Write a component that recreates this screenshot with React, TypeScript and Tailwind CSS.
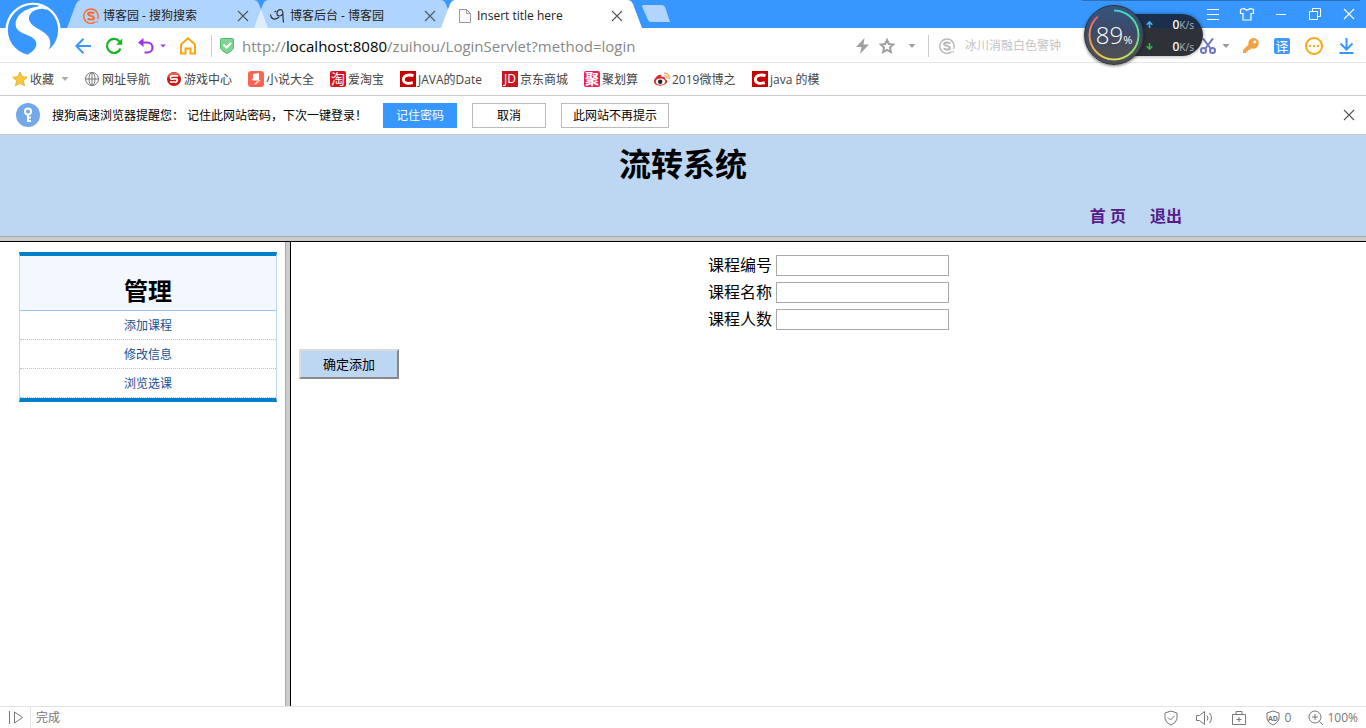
import React from "react";

const tabShape =
  "[clip-path:polygon(0_100%,9px_4px,11px_1px,14px_0,calc(100%_-_14px)_0,calc(100%_-_11px)_1px,calc(100%_-_9px)_4px,100%_100%)]";

function Caret({ className }: { className: string }) {
  return (
    <svg viewBox="0 0 8 4" className={`h-1 w-2 shrink-0 fill-current ${className}`}>
      <path d="M0.500 0h7L4 4z" />
    </svg>
  );
}

function Cross({ className }: { className: string }) {
  return (
    <svg viewBox="0 0 12 12" className={`size-3 shrink-0 fill-none stroke-current ${className}`} strokeWidth="1.1">
      <path d="M1 1l10 10M11 1L1 11" />
    </svg>
  );
}

function SogouMark({ className }: { className: string }) {
  return (
    <svg viewBox="0 0 16 16" className={`size-4 shrink-0 fill-none stroke-current ${className}`}>
      <path d="M12.500 13.800A7.200 7.200 0 1 1 14.600 11" strokeWidth="1.400" />
      <path d="M11.200 5.300C9.500 4.200 5 4 5 6.100 5 8.200 11 7.500 11 9.900 11 12 6.500 11.900 4.700 10.700" strokeWidth="2" />
      <path d="M13.700 14.300l1-1" strokeWidth="1.400" />
    </svg>
  );
}

function CsdnMark() {
  return (
    <span className="flex size-4 shrink-0 items-center justify-center bg-[#c80000]">
      <svg viewBox="0 0 16 16" className="size-4 fill-none stroke-white" strokeWidth="2.800">
        <path d="M13.500 4.600C9 3.200 3.600 4.300 3.400 8.400 3.200 12.500 8.500 12.900 12.800 11.600" />
      </svg>
    </span>
  );
}

function Tab({ title, icon, active }: { title: string; icon: React.ReactNode; active?: boolean }) {
  return (
    <div
      className={`-mr-[14px] flex h-7 w-[201px] items-center pl-4 pr-[19px] pt-1 ${tabShape} ${
        active ? "bg-white" : "bg-white/60"
      }`}
    >
      <span className="flex w-5 shrink-0">{icon}</span>
      <button className="min-w-0 flex-1 text-left text-xs leading-5 whitespace-nowrap text-[#222]">{title}</button>
      <button aria-label="关闭标签" className="text-[#555]">
        <Cross className="" />
      </button>
    </div>
  );
}

function Bookmark({ icon, label, width }: { icon: React.ReactNode; label: string; width: string }) {
  return (
    <a href="#" className={`flex shrink-0 items-center gap-[2px] ${width}`}>
      {icon}
      <span className="pt-[2px] text-xs leading-5 whitespace-nowrap text-[#444]">{label}</span>
    </a>
  );
}

function BrowserLogo() {
  return (
    <svg viewBox="0 0 174 174" className="absolute left-[4px] top-[2px] size-[58px]">
      <circle cx="87" cy="85" r="83" fill="#fff" />
      <circle cx="87" cy="84" r="75.500" fill="#3797ff" />
      <path
        fill="#fff"
        d="M112 6L100 14C66 18 35 38 35 66C35 92 66 95 84 106C104 118 102 142 72 157L84 170L126 152C142 138 144 114 128 98C112 82 78 74 75 52C73 34 90 22 112 20C118 20 126 22 132 24Z"
      />
    </svg>
  );
}

function SpeedWidget() {
  return (
    <div className="absolute left-[1084px] top-[5px] h-[60px] w-[120px]">
      <div className="absolute left-[30px] top-[9px] flex h-[42px] w-[89px] flex-col justify-between rounded-r-full bg-[linear-gradient(#1b2f4c_0,#1b2f4c_33%,#2f3138_34%,#2f3138)] py-[2px] pl-[32px] pr-[9px] shadow-[0_0_4px_rgba(0,0,0,0.4)]">
        {["#3ab0f5", "#35b84a"].map((color, i) => (
          <div key={color} className="flex h-4 items-center justify-between text-white">
            <svg viewBox="0 0 8 8" className={`size-[7px] fill-none ${i ? "rotate-180" : ""}`} stroke={color} strokeWidth="1.800">
              <path d="M4 8V1M0.800 4.300L4 1l3.200 3.300" />
            </svg>
            <span className="flex items-baseline pt-[2px] font-[Noto_Sans]">
              <b className="text-xs leading-4 font-medium">0</b>
              <span className="text-[10px] leading-4 text-[#a5a9b2]">K/s</span>
            </span>
          </div>
        ))}
      </div>
      <div className="absolute left-0 top-0 flex size-[60px] items-center justify-center rounded-full border border-[#2b3039] bg-[linear-gradient(#35557f_0,#3c4a66_45%,#4c4e58_75%)] shadow-[0_1px_3px_rgba(0,0,0,0.5)]">
        <div className="absolute inset-[3px] rounded-full bg-[conic-gradient(#38d6dc_0,#4fdd9a_20%,#8fe06a_35%,#e6dd4e_50%,#f0b04c_65%,#ef8a52_77%,#e85a7a_88%,transparent_89%)] [mask:radial-gradient(closest-side,transparent_calc(100%_-_3px),#000_calc(100%_-_2px),#000_calc(100%_-_1px),transparent)]" />
        <span className="flex items-baseline font-['Open_Sans'] font-light text-white">
          <span className="text-2xl leading-8">89</span>
          <span className="text-[11px] font-normal">%</span>
        </span>
      </div>
    </div>
  );
}

function TabStrip() {
  return (
    <div className="flex h-7 bg-[#3797ff] pl-[67px]">
      <Tab title="博客园 - 搜狗搜索" icon={<SogouMark className="text-[#ff6a2b]" />} />
      <Tab
        title="博客后台 - 博客园"
        icon={
          <svg viewBox="0 0 16 16" className="size-4 fill-none stroke-[#333]" strokeWidth="1.200">
            <path d="M0.500 6.500C1 11.500 5 12.500 9 9M12.500 6C11 9 6.500 8.500 7 5 7.500 1 12.500 0.500 12.800 4 13 8 13 11 13.500 14.500M4.500 4l1.500-1" />
          </svg>
        }
      />
      <Tab
        active
        title="Insert title here"
        icon={
          <svg viewBox="0 0 14 16" className="ml-[1px] h-4 w-[14px] fill-[#fafafa] stroke-[#999]">
            <path d="M1.500 1.500h7l4 4v9h-11zM8.500 1.500v4h4" />
          </svg>
        }
      />
      <button aria-label="新标签页" className="ml-[14px] mt-[5px] h-[17px] w-7">
        <svg viewBox="0 0 28 17" className="h-[17px] w-7 fill-[#b1d5ff]">
          <path d="M2 0h18q2 0 3 2l5 15H9q-2 0-3-2L0 1.500Q0 0 2 0z" />
        </svg>
      </button>
      <div className="ml-auto flex items-center pr-[10px] text-white">
        <button aria-label="菜单" className="flex w-[34px] justify-center">
          <svg viewBox="0 0 12 12" className="size-3 stroke-current">
            <path d="M0 1.500h12M0 6.500h12M0 11.500h12" />
          </svg>
        </button>
        <button aria-label="皮肤" className="flex w-[34px] justify-center">
          <svg viewBox="0 0 16 14" className="h-[14px] w-4 fill-none stroke-current" strokeWidth="1.200">
            <path d="M5 1.500L1.500 2.500v4H4v6.500h8V6.500h2.500v-4L11 1.500Q8 4.500 5 1.500z" />
          </svg>
        </button>
        <button aria-label="最小化" className="flex w-[34px] justify-center">
          <svg viewBox="0 0 12 12" className="size-3 stroke-current">
            <path d="M1 6.500h10" />
          </svg>
        </button>
        <button aria-label="还原" className="flex w-[34px] justify-center">
          <svg viewBox="0 0 12 12" className="size-3 fill-none stroke-current">
            <path d="M0.500 3.500h8v8h-8zM3.500 3V.500h8v8H9" />
          </svg>
        </button>
        <button aria-label="关闭" className="flex w-6 justify-end pr-[1px]">
          <Cross className="" />
        </button>
      </div>
    </div>
  );
}

function AddressBar() {
  return (
    <div className="flex h-[35px] items-center border-b border-[#e5e5e5] pt-[2px] pr-3 pl-[75px]">
      <button aria-label="后退" className="w-[30px]">
        <svg viewBox="0 0 16 16" className="size-4 fill-none stroke-[#3797ff]" strokeWidth="2">
          <path d="M16 8H2M8.500 0.800L1.300 8l7.200 7.200" />
        </svg>
      </button>
      <button aria-label="刷新" className="w-[33px]">
        <svg viewBox="0 0 18 18" className="size-[18px] fill-none stroke-[#12b81f]" strokeWidth="2.200">
          <path d="M15.500 11.500A7 7 0 1 1 14.800 5" />
          <path d="M17.200 1.500v6.200h-6z" className="fill-[#12b81f] stroke-none" />
        </svg>
      </button>
      <button aria-label="撤销" className="flex w-[42px] items-center gap-[6px] text-[#a033f0]">
        <svg viewBox="0 0 16 16" className="size-4 fill-none stroke-current" strokeWidth="2.200">
          <path d="M3 4.500h6.500a5 5 0 0 1 0 10H6.500" />
          <path d="M5.500 0v9L0 4.500z" className="fill-current stroke-none" />
        </svg>
        <Caret className="w-[6px]" />
      </button>
      <button aria-label="主页" className="w-[31px]">
        <svg viewBox="0 0 16 18" className="h-[18px] w-4 fill-none stroke-[#ffa511]" strokeWidth="2">
          <path d="M1 7.500L8 1.300l7 6.200V16.500h-4.500v-5h-5v5H1z" />
        </svg>
      </button>
      <span className="h-[22px] w-px bg-[#ccc]" />
      <svg viewBox="0 0 14 16" className="ml-2 h-4 w-[14px] fill-[#7fd394] stroke-[#4fbd69]">
        <path d="M.500 1.500q0-1 1-1h11q1 0 1 1v8.500Q12 13.500 7 15.500 2 13.500.500 10z" />
        <path d="M3.500 6.500l3 3L11 5" className="fill-none stroke-white" strokeWidth="2" />
      </svg>
      <p className="ml-2 flex-1 text-[15px] leading-6 whitespace-nowrap text-[#888]">
        http://<span className="text-black">localhost:8080</span>/zuihou/LoginServlet?method=login
      </p>
      <div className="flex items-center text-[#a0a0a0]">
        <svg viewBox="0 0 14 16" className="h-4 w-[14px] fill-current">
          <path d="M8.500 0L0 9h5.500L4 16l9-9.500H7.500z" />
        </svg>
        <svg viewBox="0 0 16 16" className="ml-[9px] size-4 fill-none stroke-current" strokeWidth="2">
          <path d="M8 2l1.800 4 4.500.500-3.300 3 .900 4.500L8 11.800 4.100 14 5 9.500l-3.300-3L6.200 6z" />
        </svg>
        <Caret className="ml-[13px]" />
        <span className="ml-3 h-[22px] w-px bg-[#ccc]" />
        <SogouMark className="ml-[10px] text-[#b8b8b8]" />
      </div>
      <input
        aria-label="搜索"
        placeholder="冰川消融白色警钟"
        className="ml-[10px] w-[235px] text-xs leading-5 outline-none placeholder:text-[#c4c4c4]"
      />
      <button aria-label="截图" className="w-4">
        <svg viewBox="0 0 16 16" className="size-4 fill-none stroke-[#6a76c0]" strokeWidth="2">
          <path d="M3 0.500L11 11M13 0.500L5 11" />
          <circle cx="3.500" cy="12.500" r="2.500" />
          <circle cx="12.500" cy="12.500" r="2.500" />
        </svg>
      </button>
      <Caret className="ml-[6px] text-[#999]" />
      <button aria-label="密码" className="ml-[13px]">
        <svg viewBox="0 0 16 16" className="size-4 fill-[#f3a144]">
          <path d="M10.500 0a5.300 5.300 0 1 1-2 10.200L6.500 12H5v1.500H3.500V15H0v-3l5.500-5.500A5.300 5.300 0 0 1 10.500 0zm1.300 2.500a1.500 1.500 0 1 0 .010 0z" />
        </svg>
      </button>
      <button aria-label="翻译" className="ml-[15px] flex size-4 items-center justify-center rounded-[2px] bg-[#4099f8] text-[13px] leading-4 text-white">
        译
      </button>
      <button aria-label="更多" className="ml-[15px]">
        <svg viewBox="0 0 18 18" className="size-[18px] fill-none stroke-[#ffa511]" strokeWidth="2">
          <circle cx="9" cy="9" r="8" />
          <path d="M4 9h2M8 9h2M12 9h2" />
        </svg>
      </button>
      <button aria-label="下载" className="ml-4">
        <svg viewBox="0 0 15 16" className="h-4 w-[15px] fill-none stroke-[#3797ff]" strokeWidth="2">
          <path d="M7.500 0v11M1.500 5.500l6 6 6-6M0.500 15h14" />
        </svg>
      </button>
    </div>
  );
}

function BookmarkBar() {
  return (
    <nav className="flex h-[33px] items-center gap-4 border-b border-[#ccc] pl-3">
      <div className="flex w-14 items-center gap-[2px] text-xs leading-5 text-[#444]">
        <svg viewBox="0 0 16 16" className="size-4 shrink-0 fill-[#f8c93a] stroke-[#e3a92a]" strokeWidth="0.800">
          <path d="M8 1l2.100 4.700 5.200.500-3.900 3.500 1.100 5.100L8 12.200l-4.500 2.600 1.100-5.100L.700 6.200l5.200-.500z" />
        </svg>
        <span className="shrink-0 pt-[2px]">收藏</span>
        <Caret className="ml-[5px] text-[#aaa]" />
      </div>
      <Bookmark
        width="w-[66px]"
        label="网址导航"
        icon={
          <svg viewBox="0 0 16 16" className="size-4 shrink-0 fill-none stroke-[#777]">
            <circle cx="8" cy="8" r="6.500" />
            <ellipse cx="8" cy="8" rx="3" ry="6.500" />
            <path d="M8 1.500v13M1.500 8h13" />
          </svg>
        }
      />
      <Bookmark
        width="w-[66px]"
        label="游戏中心"
        icon={
          <svg viewBox="0 0 16 16" className="size-4 shrink-0">
            <circle cx="8" cy="8" r="7" fill="#c9140f" />
            <path d="M1.500 6a7 7 0 0 1 13 0Q8 3 1.500 6z" fill="#e8624f" />
            <path d="M12 4.800H6.500Q4 5 4.500 7T7.500 7.800H10Q12 8 11 10T9 11H3.800" fill="none" stroke="#fff" strokeWidth="1.700" />
          </svg>
        }
      />
      <Bookmark
        width="w-[66px]"
        label="小说大全"
        icon={
          <svg viewBox="0 0 16 16" className="size-4 shrink-0">
            <rect width="16" height="16" rx="3" fill="#fb6450" />
            <path d="M5 3l6-1v6.500L9 9.500H5.500L3.500 8.500Q5 8 5 7z" fill="#fff" />
            <path d="M11 8.500l1.500.800-4.500 4.200H6L8 11z" fill="#ffd5cd" />
          </svg>
        }
      />
      <Bookmark
        width="w-[54px]"
        label="爱淘宝"
        icon={<span className="flex size-4 shrink-0 items-center justify-center rounded-[2px] bg-[#d8151f] text-sm leading-4 text-white">淘</span>}
      />
      <Bookmark width="w-[86px]" label="JAVA的Date" icon={<CsdnMark />} />
      <Bookmark
        width="w-[66px]"
        label="京东商城"
        icon={<span className="flex size-4 shrink-0 items-center justify-center bg-[#c41921] text-xs leading-4 text-white">JD</span>}
      />
      <Bookmark
        width="w-[54px]"
        label="聚划算"
        icon={<span className="flex size-4 shrink-0 items-center justify-center rounded-[2px] bg-[#f01e56] text-sm leading-4 font-bold text-white">聚</span>}
      />
      <Bookmark
        width="w-[82px]"
        label="2019微博之"
        icon={
          <svg viewBox="0 0 16 16" className="size-4 shrink-0">
            <path d="M0 10.500C0 7 5 2.800 7 4q1 .800.400 2.200C10 5.300 11.500 6 11 8c3 1 2.500 3.500.500 5-4 2.800-11.500 2-11.500-2.500z" fill="#d9292b" />
            <ellipse cx="6.500" cy="10.600" rx="4.700" ry="3.200" fill="#fff" />
            <circle cx="6.200" cy="10.800" r="2.200" fill="#222" />
            <path d="M10 2.200a4.600 4.600 0 0 1 5 6M10.500 4.500a2.400 2.400 0 0 1 2.600 3" fill="none" stroke="#f5a13a" strokeWidth="1.200" />
          </svg>
        }
      />
      <Bookmark width="w-[70px]" label="java 的模" icon={<CsdnMark />} />
    </nav>
  );
}

function PasswordPrompt() {
  return (
    <div className="flex h-[39px] items-center border-b border-[#ccc] pr-[11px] pl-4 text-xs leading-5 whitespace-nowrap text-black">
      <svg viewBox="0 0 24 24" className="size-6 shrink-0">
        <circle cx="12" cy="12" r="12" fill="#73a8ea" />
        <circle cx="12" cy="8.500" r="3" fill="none" stroke="#fff" strokeWidth="2" />
        <path d="M12 11.500V19M12 14.500h3M12 18h3" fill="none" stroke="#fff" strokeWidth="2" />
      </svg>
      <span className="ml-3 w-[331px] pt-[2px]">搜狗高速浏览器提醒您： 记住此网站密码，下次一键登录！</span>
      <button className="h-[25px] w-[74px] bg-[#3797ff] pt-[2px] text-white">记住密码</button>
      <button className="ml-[15px] h-[25px] w-[74px] border border-[#bbb] pt-[2px]">取消</button>
      <button className="ml-[15px] h-[25px] w-[108px] border border-[#bbb] pt-[2px]">此网站不再提示</button>
      <button aria-label="关闭提示" className="ml-auto text-[#555]">
        <Cross className="" />
      </button>
    </div>
  );
}

function PageHeader() {
  return (
    <header className="h-[101px] shrink-0 bg-[#bdd7f2] pt-[5px]">
      <h1 className="text-center text-[32px] leading-12 font-bold text-black">流转系统</h1>
      <nav className="mt-4 flex justify-end gap-6 pr-[184px] text-base leading-6 font-bold text-[#551a8b]">
        <a href="#">首 页</a>
        <a href="#">退出</a>
      </nav>
    </header>
  );
}

function SideMenu() {
  return (
    <aside className="w-[285px] shrink-0 pt-[10px] pr-2 pl-[19px]">
      <div className="border-x border-y-4 border-x-[#bdd7f2] border-y-[#0080c9] text-center">
        <h2 className="h-[55px] border-b border-[#9ac7f0] bg-[#f3f8ff] pt-[19px] text-2xl leading-8 font-bold text-black">管理</h2>
        <ul>
          {["添加课程", "修改信息", "浏览选课"].map((item) => (
            <li key={item} className="border-b border-dotted border-[#9ac7f0]">
              <a href="#" className="block pt-[2px] text-xs leading-[26px] text-[#1b4f93]">
                {item}
              </a>
            </li>
          ))}
        </ul>
      </div>
    </aside>
  );
}

function CourseForm() {
  return (
    <form className="flex-1 px-2 pt-[13px]" onSubmit={(e) => e.preventDefault()}>
      <div className="flex flex-col items-center gap-[6px]">
        {["课程编号", "课程名称", "课程人数"].map((label) => (
          <label key={label} className="flex h-[21px] items-center gap-1 text-base leading-5 text-black">
            <span className="pb-[2px]">{label}</span>
            <input type="text" className="h-[21px] w-[173px] border border-[#a9a9a9] px-[2px] text-[13px] outline-none" />
          </label>
        ))}
      </div>
      <button
        type="submit"
        className="mt-[19px] h-[30px] w-[100px] border-2 border-t-[#dcdcdc] border-r-[#888] border-b-[#888] border-l-[#dcdcdc] bg-[#bdd7f2] text-[13px] leading-5 text-black"
      >
        确定添加
      </button>
    </form>
  );
}

function StatusBar() {
  return (
    <footer className="flex h-[22px] shrink-0 items-center border-t border-[#e3e3e3] pr-2 pl-[9px] text-xs leading-5 text-[#777]">
      <svg viewBox="0 0 14 13" className="h-[13px] w-[14px] fill-none stroke-current">
        <path d="M.500 0v13M5.500 1v11l8-5.500z" />
      </svg>
      <span className="ml-[7px] h-full w-px bg-[#e3e3e3]" />
      <span className="ml-[5px] flex-1">完成</span>
      <div className="flex items-center">
        <svg viewBox="0 0 14 16" className="mr-[18px] h-4 w-[14px] fill-none stroke-current">
          <path d="M7 1L13 3v6q-1 4-6 6-5-2-6-6V3zM4 7.500l2.500 2.500L10.500 6" />
        </svg>
        <svg viewBox="0 0 17 14" className="mr-[19px] h-[14px] w-[17px] fill-none stroke-current">
          <path d="M.500 4.500h3l5-4v13l-5-4h-3zM11 4.500q2 2.500 0 5M13.500 2q4 5 0 10" />
        </svg>
        <svg viewBox="0 0 14 14" className="mr-5 size-[14px] fill-none stroke-current">
          <path d="M.500 3.500h13v10H.500zM4 3.500v-3h6v3M7 6v5M4.500 8.500h5" />
        </svg>
        <svg viewBox="0 0 14 16" className="mr-1 h-4 w-[14px] fill-none stroke-current">
          <path d="M7 1L13 3v6q-1 4-6 6-5-2-6-6V3z" />
          <text x="7" y="10.500" textAnchor="middle" className="fill-current stroke-none text-[7px] font-bold">
            AD
          </text>
        </svg>
        <span className="w-6">0</span>
        <svg viewBox="0 0 16 16" className="mr-[3px] size-4 fill-none stroke-current">
          <circle cx="7" cy="7" r="6" />
          <path d="M11.500 11.500L15 15M7 4v6M4 7h6" />
        </svg>
        <span>100%</span>
      </div>
    </footer>
  );
}

export default function App() {
  return (
    <div className="relative flex h-screen flex-col overflow-hidden bg-white font-['Open_Sans','Noto_Sans_CJK_SC',sans-serif]">
      <TabStrip />
      <AddressBar />
      <BookmarkBar />
      <PasswordPrompt />
      <PageHeader />
      <div className="h-[6px] shrink-0 border-t border-b border-t-[#aaa] border-b-black bg-[#ccc]" />
      <main className="flex min-h-0 flex-1">
        <SideMenu />
        <div className="w-[6px] shrink-0 border-r border-l border-r-black border-l-[#aaa] bg-[#ccc]" />
        <CourseForm />
      </main>
      <StatusBar />
      <BrowserLogo />
      <div className="absolute top-0 right-[6px] h-px w-[278px] bg-[#2b6fbd]" />
      <SpeedWidget />
    </div>
  );
}
